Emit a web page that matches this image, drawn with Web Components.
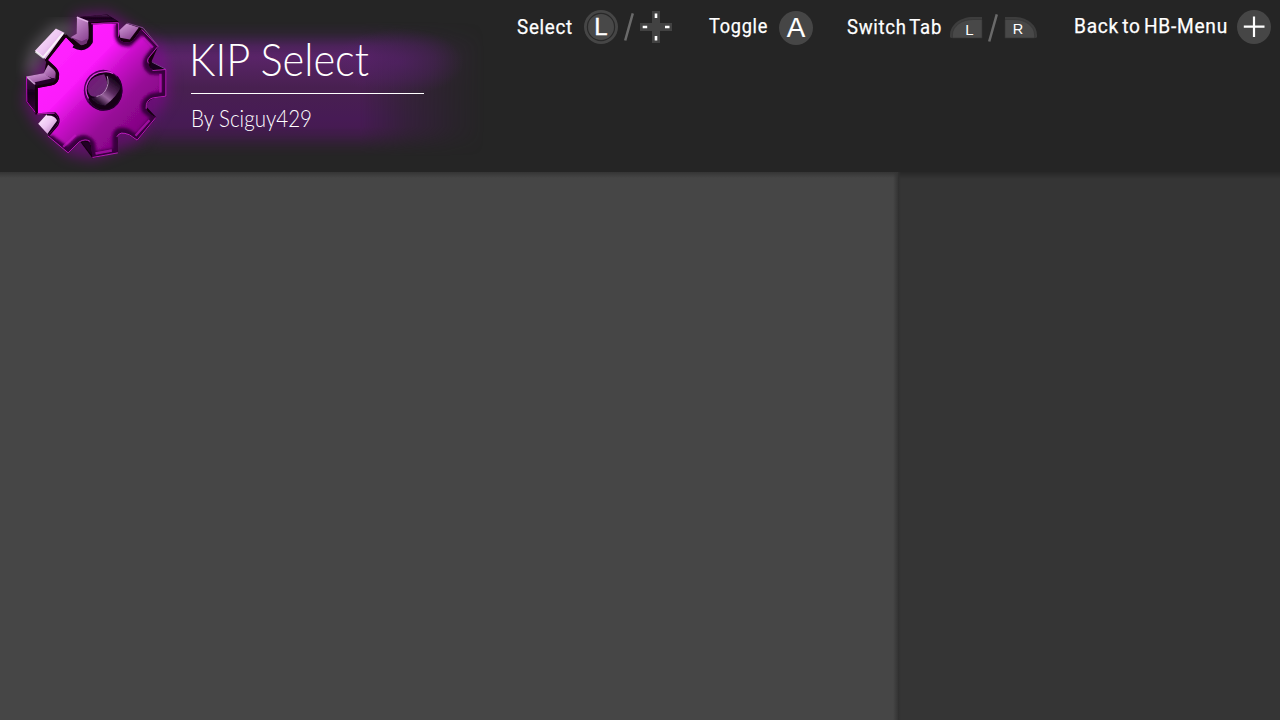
<!DOCTYPE html>
<html lang="en"><head><meta charset="utf-8"><title>KIP Select</title>
<style>html,body{margin:0;width:1280px;height:720px;overflow:hidden;background:#252525}</style></head><body>
<kip-app></kip-app>
<script>
const define=(name,html,init)=>customElements.define(name,class extends HTMLElement{
 constructor(){super();this.attachShadow({mode:'open'}).innerHTML=html;}
 connectedCallback(){if(init)init(this,this.shadowRoot);}
});
define('fit-text',`<style>:host{display:block;color:#fff}svg{display:block;overflow:visible}text{fill:currentColor}:host([tight]) text{letter-spacing:.8px;word-spacing:-2.5px;stroke:#fff;stroke-width:.25px}</style><svg><text></text></svg>`,(h,r)=>{
 const s=r.querySelector('svg'),t=r.querySelector('text'),a=n=>h.getAttribute(n);
 s.setAttribute('width',a('width'));s.setAttribute('height',a('height'));
 t.textContent=a('label');t.setAttribute('y',a('baseline'));
 t.setAttribute('textLength',a('width'));t.setAttribute('lengthAdjust','spacingAndGlyphs');
 t.style.font=a('type');
});
define('gear-logo',`<style>:host{display:block;position:relative;z-index:1;width:190px;height:172px}svg{display:block;overflow:visible}</style>
<svg width="190" height="180" viewBox="0 0 570 540">
<defs>
<linearGradient id="face" gradientUnits="userSpaceOnUse" x1="170" y1="170" x2="410" y2="400"><stop offset="0" stop-color="#ff22ff"/><stop offset=".28" stop-color="#fb1afb"/><stop offset=".48" stop-color="#c80fc8"/><stop offset=".72" stop-color="#980998"/><stop offset="1" stop-color="#820482"/></linearGradient>
<linearGradient id="pale" x1="0" y1="0" x2="1" y2="1"><stop offset="0" stop-color="#fff0ff"/><stop offset=".5" stop-color="#edc5f2"/><stop offset="1" stop-color="#b070b5"/></linearGradient>
<linearGradient id="mauve" x1="0" y1="0" x2=".6" y2="1"><stop offset="0" stop-color="#d7a0dd"/><stop offset="1" stop-color="#8c4592"/></linearGradient>
<linearGradient id="dark" x1="0" y1="0" x2="0" y2="1"><stop offset="0" stop-color="#4a184f"/><stop offset=".45" stop-color="#16011a"/><stop offset="1" stop-color="#3c053d"/></linearGradient>
<linearGradient id="hole" gradientUnits="userSpaceOnUse" x1="300" y1="310" x2="352" y2="242"><stop offset="0" stop-color="#230928"/><stop offset=".3" stop-color="#98649d"/><stop offset=".55" stop-color="#5a2a5f"/><stop offset="1" stop-color="#160219"/></linearGradient>
<linearGradient id="through" x1="0" y1="0" x2="1" y2="1"><stop offset="0" stop-color="#74157a"/><stop offset="1" stop-color="#682f71"/></linearGradient>
<filter id="b2"><feGaussianBlur stdDeviation="2"/></filter><filter id="b5"><feGaussianBlur stdDeviation="5"/></filter><filter id="b20" x="-30%" y="-30%" width="160%" height="160%"><feGaussianBlur stdDeviation="20"/></filter><filter id="b1"><feGaussianBlur stdDeviation=".9"/></filter>
<path id="f" d="M272 69L353 66L356 105Q357 127 382 127Q397 127 405 114L424 88L474 139L449 171Q438 190 452 204L464 212L498 207V288L460 293Q437 300 439 321Q438 336 468 352L412 421L390 405Q356 386 351 414L354 457L278 472L274 436Q266 414 241 423L205 457L144 407L172 374Q182 357 165 340L110 343V260L154 252Q175 246 174 224Q174 211 162 201L139 180L198 105L224 132Q258 150 269 123Z"/>
<clipPath id="fc"><use href="#f"/></clipPath>
</defs>
<path d="M230 50L322 43L355 62L475 140L498 208V288L412 421L278 472L205 457L115 370L80 305L110 200L220 130Z" fill="#9000a0" stroke="#9100a0" stroke-width="14" opacity=".55" filter="url(#b20)"/>
<path d="M90 220L110 150L168 90L225 90" fill="none" stroke="#b8a8bb" stroke-width="30" opacity=".42" filter="url(#b20)"/>
<g filter="url(#b1)" stroke-linejoin="round" transform="translate(-.5 .5)">
<path d="M230 51L322 43L356 64V110L380 69L420 80L475 138L455 184L499 208V289L462 294Q439 301 441 321L470 352L412 422L389 405Q359 389 353 410L354 457L278 474L240 423L205 459L115 371L140 343L110 343L80 306L78 229L133 219L140 180L105 152L168 85L215 117L230 101Z" fill="#13020f"/>
<path d="M231 51L265 65L268 116L250 134L213 111L230 101Z" fill="url(#mauve)"/>
<path d="M231 51L320 44L352 62L270 66Z" fill="url(#dark)"/>
<path d="M231 51L265 65" stroke="#e0b0e4" stroke-width="5"/>
<path d="M215 112L246 123L263 115L262 130L244 136Z" fill="#6f3173"/>
<path d="M105 152L168 85L194 98L137 177Z" fill="url(#pale)"/>
<path d="M107 154L130 172L190 99" fill="none" stroke="#fff" stroke-width="6" opacity=".8"/>
<path d="M145 194L168 214L166 238L130 222Z" fill="url(#mauve)"/>
<path d="M79 229L131 219L164 242L106 253Z" fill="url(#mauve)"/>
<path d="M105 246L165 233L162 249L110 258Z" fill="#250529"/>
<path d="M79 229L105 252L109 342L80 305Z" fill="url(#dark)"/>
<path d="M80 230L105 252" stroke="#cba0d1" stroke-width="4"/><path d="M80 230L81 305L110 341L162 337" fill="none" stroke="#b90abd" stroke-width="3"/>
<path d="M115 371L140 343Q171 340 174 361L144 402Z" fill="url(#pale)"/>
<path d="M141 343Q170 342 175 362L145 403" fill="none" stroke="#16001a" stroke-width="6"/>
<path d="M358 91L380 70L417 82L390 118L361 113Z" fill="url(#mauve)"/>
<path d="M382 69L430 83L475 138" fill="none" stroke="#80458a" stroke-width="3"/>
<path d="M454 186L497 206L450 207Z" fill="#16041a"/><path d="M457 186L498 207" stroke="#77418a" stroke-width="3"/>
<path d="M242 422L271 428L277 467Z" fill="#240226"/>
<use href="#f" fill="url(#face)"/>
<g clip-path="url(#fc)">
<use href="#f" fill="none" stroke="#1d001f" stroke-width="8" filter="url(#b2)"/>
<path d="M355 72V108Q360 132 388 129L427 91L472 139L447 170Q430 195 455 213H493V283L455 290Q429 305 436 330L464 353L411 414L384 396Q352 383 348 410V453L280 466L275 430Q258 407 236 419L202 451L148 410" fill="none" stroke="#37003c" stroke-width="20" filter="url(#b5)"/>
<path d="M273 70V125Q254 155 221 137" fill="none" stroke="#140017" stroke-width="12" filter="url(#b2)"/>
<path d="M430 112L459 142M482 221V277M449 360L407 407M336 451L287 460M228 404L190 440" fill="none" stroke="#c114c1" stroke-width="7" opacity=".7" filter="url(#b2)"/>
</g>
<path d="M197 105L224 132Q258 150 269 123L272 69M198 106L139 180L164 203Q185 234 162 250L110 260V343" fill="none" stroke="#14000f" stroke-width="7"/>
<path d="M112 341L164 339M144 407L205 458L238 425Q258 414 271 424M278 472L354 458M351 410Q359 391 389 404L412 420L468 352M439 326Q437 298 460 293L498 288V208L458 211M447 190Q438 181 450 168L474 139L426 88M356 109V68L274 71" fill="none" stroke="#d51fd5" stroke-width="2.4"/>
<ellipse cx="310" cy="270" rx="58" ry="61" fill="#50005a" filter="url(#b2)"/>
<ellipse cx="314" cy="272" rx="53" ry="57" fill="#160018"/>
<path d="M322 224Q350 225 363 260Q353 288 316 316Q292 316 273 294L300 288Q333 269 322 224Z" fill="url(#hole)"/>
<path d="M293 289Q266 294 263 265Q266 229 313 222Q327 246 319 267Q312 284 293 289Z" fill="url(#through)"/>
<path d="M322 228Q329 250 318 269Q309 286 290 289" fill="none" stroke="#cfa3d4" stroke-width="2.5"/>
<path d="M266 295C247 262 266 218 312 215Q327 213 340 220" fill="none" stroke="#e03be0" stroke-width="3.5"/>
<path d="M352 229Q374 257 362 295Q344 335 300 329Q278 323 267 304" fill="none" stroke="#22002a" stroke-width="4"/>
</g></svg>`);
define('key-icon',`<style>:host{display:block;flex:none}svg{display:block;overflow:visible}text{font-family:"Liberation Sans",sans-serif;fill:#fff;text-anchor:middle}</style><div></div>`,(h,r)=>{
 const icons={
 stick:`<svg width="34" height="34"><circle cx="17" cy="17" r="17" fill="#464646"/><circle cx="17" cy="17" r="13.6" fill="#484848" stroke="#292929" stroke-width="1.2"/><text x="17" y="25" font-size="24" stroke="#fff" stroke-width=".35">L</text></svg>`,
 pad:`<svg width="32" height="32"><path d="M12 0H20V12H32V20H20V32H12V20H0V12H12Z" fill="#424242"/><path d="M14.7 2.5h2.6v4.5h-2.6zM14.7 25h2.6v4.5h-2.6zM2.7 14.8h4.5v2.4H2.7zM25 14.8h4.5v2.4H25z" fill="#fff"/></svg>`,
 a:`<svg width="34" height="34"><circle cx="17" cy="17" r="17" fill="#464646"/><text x="17" y="26.2" font-size="28" stroke="#fff" stroke-width=".1" textLength="18.5" lengthAdjust="spacingAndGlyphs">A</text></svg>`,
 plus:`<svg width="34" height="34"><circle cx="17" cy="17" r="17" fill="#464646"/><path d="M6.8 16.7H27.5M17 6.5V27" stroke="#fff" stroke-width="2.2"/></svg>`,
 l:`<svg width="32" height="21"><path d="M32 0H23C10 0 0 8 0 18V19.5Q0 21 2 21H32Z" fill="#3d3d3d"/><path d="M32 2.5H23C12 2.5 2.4 9 2.4 18V21H32Z" fill="#484848" stroke="#333" stroke-width=".6"/><text x="19.3" y="18" font-size="15">L</text></svg>`,
 r:`<svg width="32" height="21"><path d="M0 0H9C22 0 32 8 32 18V19.5Q32 21 30 21H0Z" fill="#3d3d3d"/><path d="M0 2.5H9C20 2.5 29.6 9 29.6 18V21H0Z" fill="#484848" stroke="#333" stroke-width=".6"/><text x="13" y="17" font-size="14.5">R</text></svg>`,
 slash:`<svg width="10" height="28"><path d="M8.8 .3L1.2 27.5" stroke="#6a6a6a" stroke-width="2.5"/></svg>`};
 r.querySelector('div').innerHTML=icons[h.getAttribute('kind')];
});
define('control-hint',`<style>:host{display:flex;align-items:flex-start;flex:none}</style><slot></slot>`);
define('app-heading',`<style>:host{display:block;position:relative;width:320px;height:172px}
.content{position:relative;padding-top:32px}.rule{width:233px;height:1.4px;margin:10px 0 0 2px;background:#fff}.by{margin:7px 0 0 2px}
.glow{position:absolute;left:-70px;top:22px;width:365px;height:134px;background:linear-gradient(#46205a,#592467 27%,#482050 49%,#471b55 72%,#421b48);-webkit-mask-image:linear-gradient(90deg,transparent,#000 12%,#000 66%,#0007 79%,#0002 92%,transparent),linear-gradient(transparent,#0003 8%,#000d 18%,#000 24%,#000 78%,#000c 84%,#0003 94%,transparent);-webkit-mask-composite:source-in;mask-composite:intersect}
.tail{position:absolute;left:145px;top:28px;width:130px;height:68px;background:radial-gradient(closest-side,#561f6c99,#561f6c55 55%,transparent)}
</style><div class="glow"></div><div class="tail"></div><div class="content"><fit-text label="KIP Select" width="180" height="51" baseline="43.5" type='300 45px Lato,sans-serif'></fit-text><div class="rule"></div><div class="by"><fit-text label="By Sciguy429" width="121" height="30" baseline="26" type='300 23.5px Lato,sans-serif'></fit-text></div></div>`);
define('app-header',`<style>:host{display:flex;height:172px;background:#252525;position:relative}
app-heading{margin-left:-1px;flex:none}.controls{display:flex;margin-left:8px;flex:none}.controls fit-text,gear-logo{flex:none}
</style><gear-logo></gear-logo><app-heading></app-heading><div class="controls">
<control-hint><fit-text tight label="Select" width="56" height="42" baseline="34" type='400 20.5px Roboto,sans-serif'></fit-text><key-icon kind="stick" style="margin:10px 0 0 11px"></key-icon><key-icon kind="slash" style="margin:13px 0 0 6px"></key-icon><key-icon kind="pad" style="margin:11px 0 0 6px"></key-icon></control-hint>
<control-hint style="margin-left:37px"><fit-text tight label="Toggle" width="59" height="42" baseline="33" type='400 20.5px Roboto,sans-serif'></fit-text><key-icon kind="a" style="margin:11px 0 0 11px"></key-icon></control-hint>
<control-hint style="margin-left:34px"><fit-text tight label="Switch Tab" width="95" height="42" baseline="34" type='400 20.5px Roboto,sans-serif'></fit-text><key-icon kind="l" style="margin:17px 0 0 8px"></key-icon><key-icon kind="slash" style="margin:14px 0 0 6px"></key-icon><key-icon kind="r" style="margin:17px 0 0 7px"></key-icon></control-hint>
<control-hint style="margin-left:37px"><fit-text tight label="Back to HB-Menu" width="154" height="42" baseline="33" type='400 20.5px Roboto,sans-serif'></fit-text><key-icon kind="plus" style="margin:10px 0 0 9px"></key-icon></control-hint></div>`);
define('content-panes',`<style>:host{display:grid;grid-template-columns:898px 1fr;height:548px}.main{background:linear-gradient(90deg,transparent 893px,#343434),linear-gradient(#353535,#464646 6px,#464646)}.side{background:linear-gradient(90deg,#303030,transparent 3px),linear-gradient(#272727,#353535 7px,#353535)}</style><div class="main"></div><div class="side"></div>`);
define('kip-app',`<style>:host{display:block;width:1280px;height:720px;overflow:hidden}</style><app-header></app-header><content-panes></content-panes>`);
</script></body></html>
